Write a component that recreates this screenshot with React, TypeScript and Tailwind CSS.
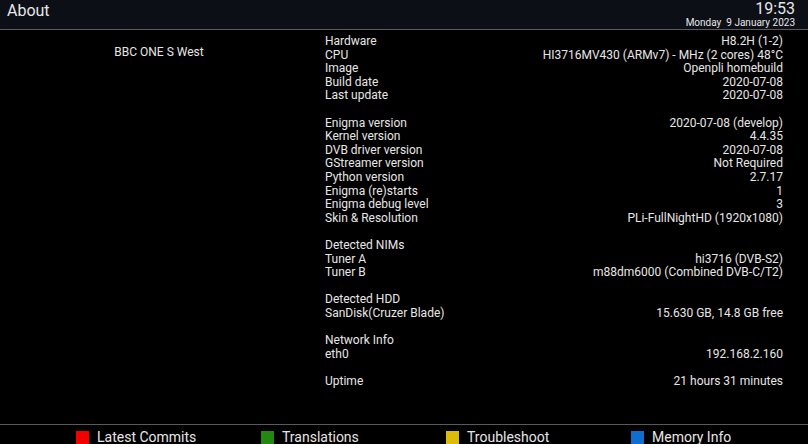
import React from 'react';

type Row = [string, string] | null;

const rows: Row[] = [
  ['Hardware', 'H8.2H (1-2)'],
  ['CPU', 'HI3716MV430 (ARMv7) - MHz (2 cores) 48°C'],
  ['Image', 'Openpli homebuild'],
  ['Build date', '2020-07-08'],
  ['Last update', '2020-07-08'],
  null,
  ['Enigma version', '2020-07-08 (develop)'],
  ['Kernel version', '4.4.35'],
  ['DVB driver version', '2020-07-08'],
  ['GStreamer version', 'Not Required'],
  ['Python version', '2.7.17'],
  ['Enigma (re)starts', '1'],
  ['Enigma debug level', '3'],
  ['Skin & Resolution', 'PLi-FullNightHD (1920x1080)'],
  null,
  ['Detected NIMs', ''],
  ['Tuner A', 'hi3716 (DVB-S2)'],
  ['Tuner B', 'm88dm6000 (Combined DVB-C/T2)'],
  null,
  ['Detected HDD', ''],
  ['SanDisk(Cruzer Blade)', '15.630 GB, 14.8 GB free'],
  null,
  ['Network Info', ''],
  ['eth0', '192.168.2.160'],
  null,
  ['Uptime', '21 hours 31 minutes'],
];

const buttons = [
  { label: 'Latest Commits', color: 'bg-[#f20000]' },
  { label: 'Translations', color: 'bg-[#22880f]' },
  { label: 'Troubleshoot', color: 'bg-[#dcbc0a]' },
  { label: 'Memory Info', color: 'bg-[#0f6fd0]' },
];

const App = () => {
  return (
    <div className="w-[808px] h-[444px] overflow-hidden bg-black text-[#e6e6e6] flex flex-col font-['Roboto',sans-serif]">
      {/* header */}
      <div className="h-[29px] bg-[#0d0f17] flex items-start justify-between pl-[7px] pr-[13px] shrink-0">
        <span className="text-[16px] leading-[22px]">About</span>
        <div className="flex flex-col items-end">
          <span className="text-[16px] leading-[16px] pt-[1px]">19:53</span>
          <span className="text-[10px] leading-[11px] whitespace-pre">Monday  9 January 2023</span>
        </div>
      </div>
      <div className="h-px bg-[#5a5a5e] shrink-0" />

      {/* body */}
      <div className="flex flex-1 pt-[5px]">
        <div className="w-[318px] text-center text-[12px] leading-[13.6px] pt-[11px]">BBC ONE S West</div>
        <div className="w-[458px] ml-[7px] text-[12px] leading-[13.6px]">
          {rows.map((r, i) =>
            r ? (
              <div key={i} className="flex justify-between h-[13.6px]">
                <span>{r[0]}</span>
                <span>{r[1]}</span>
              </div>
            ) : (
              <div key={i} className="h-[13.6px]" />
            )
          )}
        </div>
      </div>

      {/* footer */}
      <div className="h-px bg-[#5a5a5e] shrink-0" />
      <div className="h-[19px] flex items-start pl-[76px] pt-[5px] shrink-0">
        {buttons.map((b) => (
          <div key={b.label} className="w-[185px] shrink-0 flex items-start gap-[8px]">
            <span className={`w-[13px] h-[13px] shrink-0 mt-[1px] ${b.color}`} />
            <span className="text-[14px] leading-[15px] whitespace-nowrap">{b.label}</span>
          </div>
        ))}
      </div>
    </div>
  );
};

export default App;
